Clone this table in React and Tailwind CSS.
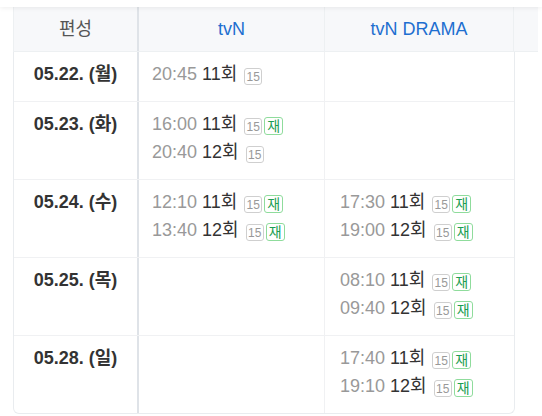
const rows = [
  {
    date: "05.22. (월)",
    tvn: [{ time: "20:45", ep: "11회", re: false }],
    drama: [],
  },
  {
    date: "05.23. (화)",
    tvn: [
      { time: "16:00", ep: "11회", re: true },
      { time: "20:40", ep: "12회", re: false },
    ],
    drama: [],
  },
  {
    date: "05.24. (수)",
    tvn: [
      { time: "12:10", ep: "11회", re: true },
      { time: "13:40", ep: "12회", re: true },
    ],
    drama: [
      { time: "17:30", ep: "11회", re: true },
      { time: "19:00", ep: "12회", re: true },
    ],
  },
  {
    date: "05.25. (목)",
    tvn: [],
    drama: [
      { time: "08:10", ep: "11회", re: true },
      { time: "09:40", ep: "12회", re: true },
    ],
  },
  {
    date: "05.28. (일)",
    tvn: [],
    drama: [
      { time: "17:40", ep: "11회", re: true },
      { time: "19:10", ep: "12회", re: true },
    ],
  },
];

function Slot({ item }) {
  return (
    <div className="flex h-[28px] items-center whitespace-nowrap">
      <span className="text-[#999]">{item.time}</span>
      <span className="ml-[5px] text-[#333]">{item.ep}</span>
      <span className="ml-[7px] mt-[5px] flex h-[17px] w-[18px] items-center justify-center rounded-[3px] border border-[#cfcfcf] text-[12px] leading-none text-[#999]">
        15
      </span>
      {item.re && (
        <span className="ml-[2px] mt-[4px] flex h-[18px] w-[19px] items-center justify-center rounded-[3px] border border-[#8fdc9c] text-[14px] leading-none text-[#1c9e52]">
          재
        </span>
      )}
    </div>
  );
}

export default function App() {
  return (
    <div
      className="min-h-screen bg-white text-[18px]"
      style={{ fontFamily: '"Liberation Sans", "Noto Sans CJK KR", sans-serif' }}
    >
      <div className="relative z-10 h-[7px] bg-white shadow-[0_1px_5px_rgba(0,0,0,0.07)]" />
      <div className="pl-[13px]">
        <div className="flex h-[45px] w-[525px] border-b border-l border-[#edf0f2] bg-[#f7f8fa]">
          <div className="flex w-[125px] items-center justify-center border-r-2 border-[#dfe3e8] text-[#555]">
            편성
          </div>
          <div className="flex w-[186px] items-center justify-center border-r border-[#edf0f2] text-[#1e6fd0]">
            tvN
          </div>
          <div className="flex w-[189px] items-center justify-center border-r border-[#edf0f2] text-[#1e6fd0]">
            tvN DRAMA
          </div>
          <div className="flex-1" />
        </div>
        <div className="w-[502px] overflow-hidden rounded-b-md border-x border-b border-[#e9ecef]">
          {rows.map((row, i) => (
            <div
              key={row.date}
              className={
                "grid grid-cols-[125px_186px_189px] " +
                (i < rows.length - 1 ? "border-b border-[#f0f1f3]" : "")
              }
            >
              <div className="border-r-2 border-[#dfe3e8] pt-2 pb-[13px] text-center leading-[28px] font-bold text-[#333]">
                {row.date}
              </div>
              <div className="border-r border-[#f0f1f3] pl-[13px] pt-2 pb-[13px]">
                {row.tvn.map((item) => (
                  <Slot key={item.time} item={item} />
                ))}
              </div>
              <div className="pl-[15px] pt-2 pb-[13px]">
                {row.drama.map((item) => (
                  <Slot key={item.time} item={item} />
                ))}
              </div>
            </div>
          ))}
        </div>
      </div>
    </div>
  );
}
